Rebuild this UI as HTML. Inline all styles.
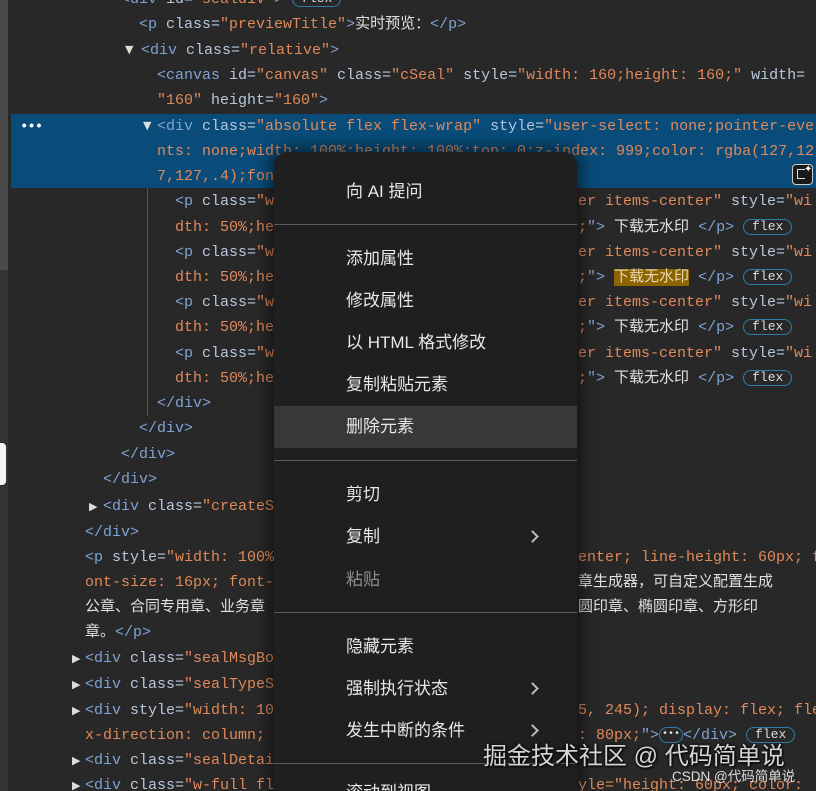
<!DOCTYPE html>
<html><head><meta charset="utf-8">
<style>
*{margin:0;padding:0;box-sizing:border-box}
html,body{width:816px;height:791px;overflow:hidden}
body{background:#282828;position:relative;font-family:"Liberation Mono","Noto Sans CJK SC",monospace;font-size:15px;color:#dcdcdc}
.l{position:absolute;white-space:pre;height:25px;line-height:25px;overflow:hidden}
.t{color:#7fa3d3}.a{color:#b8c8dc}.v{color:#e0895a}.x{color:#e0e0e0}
.sel{position:absolute;left:11px;top:114px;width:805px;height:74px;background:#094c7a}
.tri{position:absolute;font-size:11px;color:#ddd;line-height:25px;font-family:"DejaVu Sans",sans-serif}
.badge{display:inline-block;border:1.5px solid #2e7fa8;border-radius:9px;font-size:13px;line-height:14px;padding:0 8px;color:#ddd;vertical-align:middle}
.menu{position:absolute;left:274px;top:152px;width:303px;height:639px;overflow:hidden;background:#1f1f1f;border-radius:14px 14px 0 0;box-shadow:0 0 14px 6px rgba(0,0,0,.45);font-family:"Liberation Sans","Noto Sans CJK SC",sans-serif;font-size:17px;color:#e8e8e8;z-index:5}
.mi{position:absolute;left:72px;line-height:22px}
.sep{position:absolute;left:0;width:303px;height:1px;background:#5a5a5a}
.chev{position:absolute;left:254px;width:9px;height:9px;border-right:2px solid #bbb;border-top:2px solid #bbb;transform:rotate(45deg)}
.wm{position:absolute;left:483px;top:736px;font-family:"Liberation Sans","Noto Sans CJK SC",sans-serif;font-size:24px;color:rgba(235,235,235,.9);text-shadow:0 0 3px #000,1px 1px 2px #000;z-index:9;white-space:nowrap}
.wm2{position:absolute;left:672px;top:765px;font-family:"Liberation Sans","Noto Sans CJK SC",sans-serif;font-size:13.5px;color:#ddd;z-index:9;white-space:nowrap}
</style></head><body>
<div style="position:absolute;left:0;top:0;width:8px;height:791px;background:#333"></div>
<div style="position:absolute;left:0;top:0;width:8px;height:270px;background:#4a4a4a"></div>
<div style="position:absolute;left:0;top:443px;width:6px;height:42px;background:#f4f4f4;border-radius:0 4px 4px 0"></div>
<div class="sel"></div>
<div style="position:absolute;left:20px;top:119px;color:#fff;font-size:14px;font-weight:bold;letter-spacing:-1px">•••</div>
<div style="position:absolute;left:147px;top:188px;width:1px;height:228px;background:#555"></div>

<div class="l" style="left:121px;top:-13px"><span class="t">&lt;div </span><span class="a">id=</span><span class="v">"sealdiv"</span><span class="t">&gt;</span> <span class="badge">flex</span></div>
<div class="l" style="left:139px;top:12px"><span class="t">&lt;p </span><span class="a">class=</span><span class="v">"previewTitle"</span><span class="t">&gt;</span><span class="x">实时预览：</span><span class="t">&lt;/p&gt;</span></div>
<div class="tri" style="left:125px;top:37px">▼</div>
<div class="l" style="left:141px;top:38px"><span class="t">&lt;div </span><span class="a">class=</span><span class="v">"relative"</span><span class="t">&gt;</span></div>
<div class="l" style="left:157px;top:63px"><span class="t">&lt;canvas </span><span class="a">id=</span><span class="v">"canvas"</span><span class="a"> class=</span><span class="v">"cSeal"</span><span class="a"> style=</span><span class="v">"width: 160;height: 160;"</span><span class="a"> width=</span></div>
<div class="l" style="left:157px;top:88px"><span class="v">"160"</span><span class="a"> height=</span><span class="v">"160"</span><span class="t">&gt;</span></div>
<div class="tri" style="left:143px;top:113px">▼</div>
<div class="l" style="left:157px;top:114px"><span class="t">&lt;div </span><span class="a">class=</span><span class="v">"absolute flex flex-wrap"</span><span class="a"> style=</span><span class="v">"user-select: none;pointer-eve</span></div>
<div class="l" style="left:157px;top:139px"><span class="v">nts: none;width: 100%;height: 100%;top: 0;z-index: 999;color: rgba(127,12</span></div>
<div class="l" style="left:157px;top:164px"><span class="v">7,127,.4);font-size: 14px;"</span></div>
<div style="position:absolute;left:792px;top:164px;width:21px;height:21px;border:1.5px solid #ccc;border-radius:4px;background:#1a1a1a"><div style="position:absolute;left:4px;top:4px;width:8px;height:10px;border:1.5px solid #ddd;border-right:none"></div><div style="position:absolute;left:11px;top:-1px;color:#fff;font-size:10px;font-family:'DejaVu Sans'">✦</div></div>

<div class="l" style="left:175px;top:189px;width:100px"><span class="t">&lt;p </span><span class="a">class=</span><span class="v">"w-[50%]</span></div>
<div class="l" style="left:578px;top:189px"><span class="v">er items-center"</span><span class="a"> style=</span><span class="v">"wi</span></div>
<div class="l" style="left:175px;top:215px;width:100px"><span class="v">dth: 50%;height</span></div>
<div class="l" style="left:578px;top:215px"><span class="v">;</span><span class="t">"&gt;</span> <span class="x">下载无水印</span> <span class="t">&lt;/p&gt;</span> <span class="badge">flex</span></div>
<div class="l" style="left:175px;top:240px;width:100px"><span class="t">&lt;p </span><span class="a">class=</span><span class="v">"w-[50%]</span></div>
<div class="l" style="left:578px;top:240px"><span class="v">er items-center"</span><span class="a"> style=</span><span class="v">"wi</span></div>
<div class="l" style="left:175px;top:265px;width:100px"><span class="v">dth: 50%;height</span></div>
<div class="l" style="left:578px;top:265px"><span class="v">;</span><span class="t">"&gt;</span> <span class="x" style="background:#8c6500;color:#e8d8b0">下载无水印</span> <span class="t">&lt;/p&gt;</span> <span class="badge">flex</span></div>
<div class="l" style="left:175px;top:290px;width:100px"><span class="t">&lt;p </span><span class="a">class=</span><span class="v">"w-[50%]</span></div>
<div class="l" style="left:578px;top:290px"><span class="v">er items-center"</span><span class="a"> style=</span><span class="v">"wi</span></div>
<div class="l" style="left:175px;top:315px;width:100px"><span class="v">dth: 50%;height</span></div>
<div class="l" style="left:578px;top:315px"><span class="v">;</span><span class="t">"&gt;</span> <span class="x">下载无水印</span> <span class="t">&lt;/p&gt;</span> <span class="badge">flex</span></div>
<div class="l" style="left:175px;top:341px;width:100px"><span class="t">&lt;p </span><span class="a">class=</span><span class="v">"w-[50%]</span></div>
<div class="l" style="left:578px;top:341px"><span class="v">er items-center"</span><span class="a"> style=</span><span class="v">"wi</span></div>
<div class="l" style="left:175px;top:366px;width:100px"><span class="v">dth: 50%;height</span></div>
<div class="l" style="left:578px;top:366px"><span class="v">;</span><span class="t">"&gt;</span> <span class="x">下载无水印</span> <span class="t">&lt;/p&gt;</span> <span class="badge">flex</span></div>

<div class="l" style="left:157px;top:391px"><span class="t">&lt;/div&gt;</span></div>
<div class="l" style="left:139px;top:416px"><span class="t">&lt;/div&gt;</span></div>
<div class="l" style="left:121px;top:442px"><span class="t">&lt;/div&gt;</span></div>
<div class="l" style="left:103px;top:467px"><span class="t">&lt;/div&gt;</span></div>
<div class="tri" style="left:89px;top:494px">▶</div>
<div class="l" style="left:103px;top:494px;width:172px"><span class="t">&lt;div </span><span class="a">class=</span><span class="v">"createSeal"</span><span class="t">&gt;</span></div>
<div class="l" style="left:85px;top:520px"><span class="t">&lt;/div&gt;</span></div>
<div class="l" style="left:85px;top:545px;width:190px"><span class="t">&lt;p </span><span class="a">style=</span><span class="v">"width: 100%; text-align</span></div>
<div class="l" style="left:578px;top:545px"><span class="v">enter; line-height: 60px; f</span></div>
<div class="l" style="left:85px;top:570px;width:190px"><span class="v">ont-size: 16px; font-weight</span></div>
<div class="l" style="left:578px;top:570px"><span class="x">章生成器，可自定义配置生成</span></div>
<div class="l" style="left:85px;top:595px;width:190px"><span class="x">公章、合同专用章、业务章</span></div>
<div class="l" style="left:578px;top:595px"><span class="x">圆印章、椭圆印章、方形印</span></div>
<div class="l" style="left:85px;top:620px"><span class="x">章。</span><span class="t">&lt;/p&gt;</span></div>
<div class="tri" style="left:72px;top:646px">▶</div>
<div class="l" style="left:85px;top:646px;width:190px"><span class="t">&lt;div </span><span class="a">class=</span><span class="v">"sealMsgBox"</span></div>
<div class="tri" style="left:72px;top:672px">▶</div>
<div class="l" style="left:85px;top:672px;width:190px"><span class="t">&lt;div </span><span class="a">class=</span><span class="v">"sealTypeSel"</span></div>
<div class="tri" style="left:72px;top:698px">▶</div>
<div class="l" style="left:85px;top:698px;width:190px"><span class="t">&lt;div </span><span class="a">style=</span><span class="v">"width: 100%</span></div>
<div class="l" style="left:578px;top:698px"><span class="v">5, 245); display: flex; fle</span></div>
<div class="l" style="left:85px;top:723px;width:190px"><span class="v">x-direction: column; a</span></div>
<div class="l" style="left:578px;top:723px"><span class="v">: 80px;</span><span class="t">"&gt;</span><span class="badge" style="padding:0 2px;border-radius:8px;font-size:10px">•••</span><span class="t">&lt;/div&gt;</span> <span class="badge">flex</span></div>
<div class="tri" style="left:72px;top:748px">▶</div>
<div class="l" style="left:85px;top:748px;width:190px"><span class="t">&lt;div </span><span class="a">class=</span><span class="v">"sealDetail"</span></div>
<div class="tri" style="left:72px;top:773px">▶</div>
<div class="l" style="left:85px;top:773px;width:190px"><span class="t">&lt;div </span><span class="a">class=</span><span class="v">"w-full flex</span></div>
<div class="l" style="left:578px;top:773px"><span class="v">yle="height: 60px; color:</span></div>

<div class="menu">
<div class="mi" style="top:29px">向 AI 提问</div>
<div class="sep" style="top:72px"></div>
<div class="mi" style="top:96px">添加属性</div>
<div class="mi" style="top:138px">修改属性</div>
<div class="mi" style="top:180px">以 HTML 格式修改</div>
<div class="mi" style="top:222px">复制粘贴元素</div>
<div style="position:absolute;left:0;top:254px;width:303px;height:42px;background:#383838"></div>
<div class="mi" style="top:264px">删除元素</div>
<div class="sep" style="top:308px"></div>
<div class="mi" style="top:332px">剪切</div>
<div class="mi" style="top:374px">复制</div>
<div class="chev" style="top:380px"></div>
<div class="mi" style="top:417px;color:#8e8e8e">粘贴</div>
<div class="sep" style="top:460px"></div>
<div class="mi" style="top:484px">隐藏元素</div>
<div class="mi" style="top:526px">强制执行状态</div>
<div class="chev" style="top:532px"></div>
<div class="mi" style="top:568px">发生中断的条件</div>
<div class="chev" style="top:574px"></div>
<div class="sep" style="top:611px"></div>
<div class="mi" style="top:630px">滚动到视图</div>
</div>
<div class="wm">掘金技术社区 @ 代码简单说</div>
<div class="wm2">CSDN @代码简单说</div>
</body></html>
